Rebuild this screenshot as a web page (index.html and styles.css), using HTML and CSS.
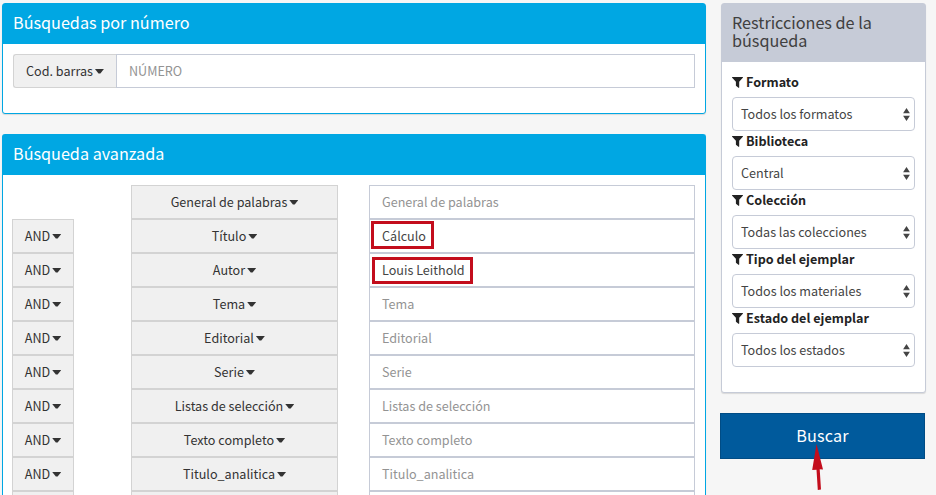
FILE: index.html
```html
<!DOCTYPE html>
<html lang="es">
<head>
<meta charset="utf-8">
<title>Búsqueda avanzada</title>
<link rel="stylesheet" href="styles.css">
</head>
<body>
<svg class="defs" width="0" height="0">
<symbol id="filter" viewBox="0 0 11 11"><path d="M0.400 0h10.200c.4 0 .5.5.2.8L7.200 4.800v5.700c0 .4-.4.6-.7.3L4.200 9.100A.8.8 0 0 1 3.900 8.600V4.800L.2.8C-.1.500 0 0 .4 0z"/></symbol>
<symbol id="updown" viewBox="0 0 7 13"><path d="M3.500 0 6.900 5.300H.1zM3.500 13 .1 7.700h6.800z"/></symbol>
</svg>
<div class="page">
<main class="main">
<section class="panel number">
<h3 class="panel-title">Búsquedas por número</h3>
<div class="panel-body">
<div class="group"><div class="btn"><span>Cod. barras</span><i class="caret"></i></div><div class="field placeholder">NÚMERO</div></div>
</div>
</section>
<section class="panel advanced">
<h3 class="panel-title">Búsqueda avanzada</h3>
<div class="panel-body">
<div class="row"><div></div><div class="btn"><span>General de palabras</span><i class="caret"></i></div><div class="field placeholder">General de palabras</div></div>
<div class="row"><div class="btn"><span>AND</span><i class="caret"></i></div><div class="btn"><span>Título</span><i class="caret"></i></div><div class="field">Cálculo<b class="mark mark-title"></b></div></div>
<div class="row"><div class="btn"><span>AND</span><i class="caret"></i></div><div class="btn"><span>Autor</span><i class="caret"></i></div><div class="field">Louis Leithold<b class="mark mark-author"></b></div></div>
<div class="row"><div class="btn"><span>AND</span><i class="caret"></i></div><div class="btn"><span>Tema</span><i class="caret"></i></div><div class="field placeholder">Tema</div></div>
<div class="row"><div class="btn"><span>AND</span><i class="caret"></i></div><div class="btn"><span>Editorial</span><i class="caret"></i></div><div class="field placeholder">Editorial</div></div>
<div class="row"><div class="btn"><span>AND</span><i class="caret"></i></div><div class="btn"><span>Serie</span><i class="caret"></i></div><div class="field placeholder">Serie</div></div>
<div class="row"><div class="btn"><span>AND</span><i class="caret"></i></div><div class="btn"><span>Listas de selección</span><i class="caret"></i></div><div class="field placeholder">Listas de selección</div></div>
<div class="row"><div class="btn"><span>AND</span><i class="caret"></i></div><div class="btn"><span>Texto completo</span><i class="caret"></i></div><div class="field placeholder">Texto completo</div></div>
<div class="row"><div class="btn"><span>AND</span><i class="caret"></i></div><div class="btn"><span>Titulo_analitica</span><i class="caret"></i></div><div class="field placeholder">Titulo_analitica</div></div>
<div class="row cut"><div class="btn"></div><div class="btn"></div><div class="field"></div></div>
</div>
</section>
</main>
<aside class="side">
<section class="panel filters">
<h3 class="panel-title">Restricciones de la<br>búsqueda</h3>
<div class="panel-body">
<div class="label"><svg><use href="#filter"/></svg><span>Formato</span></div>
<div class="select"><span>Todos los formatos</span><svg><use href="#updown"/></svg></div>
<div class="label"><svg><use href="#filter"/></svg><span>Biblioteca</span></div>
<div class="select"><span>Central</span><svg><use href="#updown"/></svg></div>
<div class="label"><svg><use href="#filter"/></svg><span>Colección</span></div>
<div class="select"><span>Todas las colecciones</span><svg><use href="#updown"/></svg></div>
<div class="label"><svg><use href="#filter"/></svg><span>Tipo del ejemplar</span></div>
<div class="select"><span>Todos los materiales</span><svg><use href="#updown"/></svg></div>
<div class="label"><svg><use href="#filter"/></svg><span>Estado del ejemplar</span></div>
<div class="select"><span>Todos los estados</span><svg><use href="#updown"/></svg></div>
</div>
</section>
<div class="submit">Buscar
<svg class="arrow" viewBox="0 0 12 48"><path d="M4.500 0 11 25.500 7.700 25.300 9 45.500 5.800 46 4.500 25.700.2 26z"/></svg>
</div>
</aside>
</div>
</body>
</html>
```
FILE: styles.css
```css
* { box-sizing: border-box; }
body {
  margin: 0;
  background: #f6f6f6;
  color: #333;
  font: 12.6px/20px "Noto Sans CJK SC", "Noto Sans", sans-serif;
}
.defs { display: block; }
.page { display: flex; gap: 15px; height: 495px; padding: 3px 10px 0 2px; overflow: hidden; }
.main { width: 704px; display: flex; flex-direction: column; gap: 20px; }
.side { width: 205px; }
.panel {
  background: #fff;
  border: 1px solid #00a7e3;
  border-radius: 3px;
  box-shadow: 0 1px 1px rgba(0, 0, 0, .12);
}
.panel-title {
  margin: 0;
  height: 40px;
  padding: 0 10px;
  background: #00a7e3;
  color: #fff;
  font-size: 16.2px;
  font-weight: 400;
  line-height: 36px;
}
.panel-body { padding: 10px; }
.number { height: 111px; }
.advanced { flex: 1; border-bottom: 0; border-radius: 3px 3px 0 0; }
.group { display: grid; grid-template-columns: 103px 579px; }
.btn {
  height: 34px;
  display: flex;
  align-items: center;
  justify-content: center;
  gap: 2px;
  background: #f0f0f0;
  border: 1px solid #d3d3d3;
  white-space: nowrap;
}
.group .btn { border-right: 0; border-radius: 3px 0 0 3px; }
.caret { width: 9px; height: 5px; background: #333; clip-path: polygon(0 0, 100% 0, 100% 10%, 60% 100%, 40% 100%, 0 10%); }
.field {
  position: relative;
  height: 34px;
  padding: 0 12px;
  border: 1px solid #c6cbd7;
  background: #fff;
  line-height: 32px;
  color: #444;
}
.placeholder { color: #939393; }
.advanced .panel-body { padding: 10px 10px 0 9px; }
.row { display: grid; grid-template-columns: 62px 57px 207px 31px 326px; }
.row > :nth-child(2) { grid-column: 3; }
.row > :nth-child(3) { grid-column: 5; }
.cut > * { height: 4px; border-bottom: 0; }
.mark { position: absolute; border: 3px solid #c30d1c; }
.mark-title { left: 1px; top: 1px; width: 63px; height: 28px; }
.mark-author { left: 2px; top: 3px; width: 101px; height: 27px; }
.filters { height: 390px; border-color: #c6cbd7; }
.filters .panel-title {
  height: 58px;
  padding-top: 9px;
  background: #c6cbd7;
  color: #404040;
  line-height: 18px;
}
.label {
  height: 25px;
  padding-bottom: 5px;
  display: flex;
  align-items: center;
  gap: 3px;
  color: #222;
  font-weight: 700;
}
.label svg { width: 11px; height: 11px; fill: #222; }
.select {
  height: 34px;
  padding: 0 4px 0 8px;
  display: flex;
  align-items: center;
  justify-content: space-between;
  border: 1px solid #c6cbd7;
  border-radius: 4px;
  color: #444;
}
.select svg { width: 7px; height: 13px; fill: #444; }
.submit {
  position: relative;
  width: 205px;
  height: 46px;
  margin: 20px 0 0 -1px;
  border: 1px solid #004c85;
  background: #005a9c;
  color: #fff;
  font-size: 16.2px;
  letter-spacing: 0.2px;
  line-height: 43px;
  text-align: center;
}
.arrow { position: absolute; left: 91px; top: 30px; width: 12px; height: 48px; fill: #c30d1c; }
```
